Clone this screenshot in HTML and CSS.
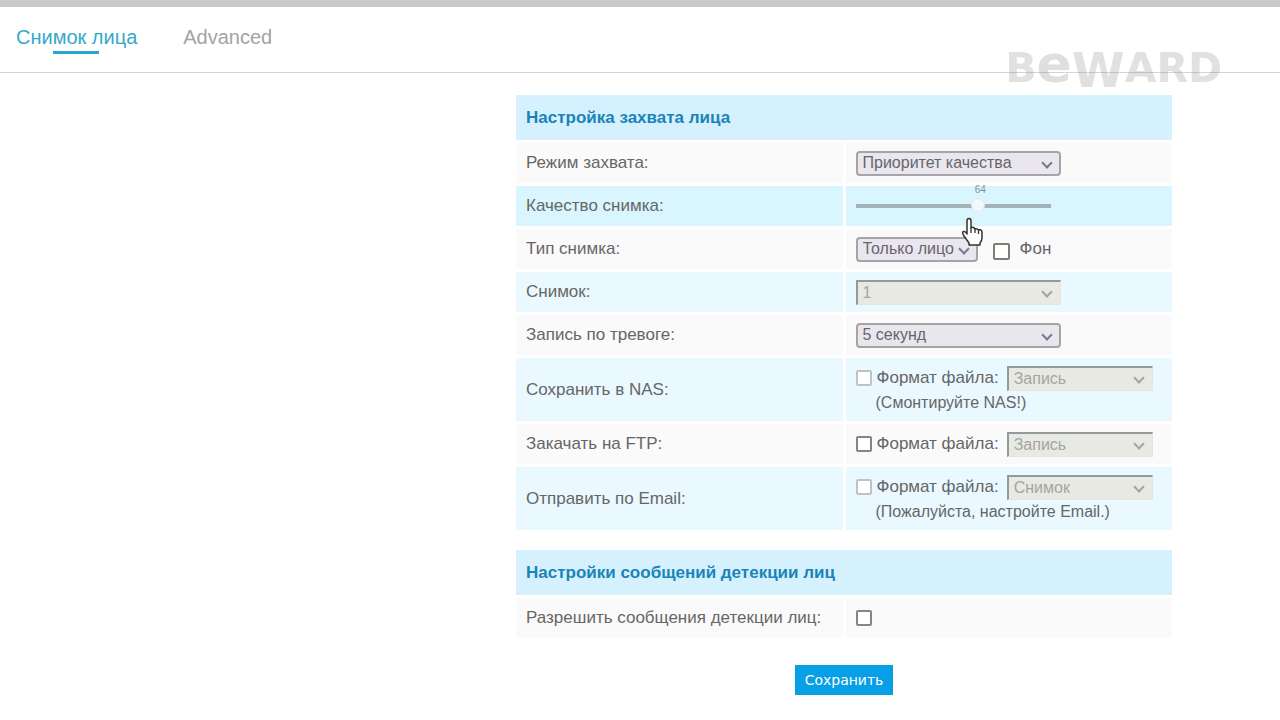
FILE: index.html
```
<!DOCTYPE html>
<html lang="ru">
<head>
    <meta charset="utf-8">
    <title>Снимок лица</title>
    <link rel="stylesheet" href="styles.css">
</head>
<body>
    <header class="header">
        <nav class="tabs">
            <a href="#face" class="tab active">Снимок лица</a>
            <a href="#advanced" class="tab">Advanced</a>
        </nav>
        <div class="logo">B<span class="logo-e">e</span><span class="logo-w">W</span>ARD</div>
    </header>
    <main class="main">
        <form class="settings">
            <table class="panel">
                <thead>
                    <tr><th colspan="2">Настройка захвата лица</th></tr>
                </thead>
                <tbody>
                    <tr>
                        <td><label for="mode">Режим захвата:</label></td>
                        <td>
                            <span class="select wide">
                                <select id="mode"><option>Приоритет качества</option></select>
                            </span>
                        </td>
                    </tr>
                    <tr class="hover">
                        <td><label for="quality">Качество снимка:</label></td>
                        <td>
                            <div class="slider">
                                <output class="slider-value" id="qualityValue" for="quality">64</output>
                                <input type="range" id="quality" min="0" max="100" value="64">
                                <svg class="pointer" viewBox="0 0 24 30" width="24" height="30">
                                    <path d="M6 17V4q0-2.500 2-2.500t2 2.500v7q1-1 2.500-.5 1 .5 1.500 1.500 2-1 3.500 1 3-1 3.500 2v6q0 3-2 5v2H8v-2L3 19q-2.500-4-.5-4.500t3.500 2.500z" fill="#fff" stroke="#333" stroke-width="1.500" stroke-linejoin="round"/>
                                    <path d="M10 11v5M14 12v4M17.500 13v4" fill="none" stroke="#333" stroke-width="1.300"/>
                                </svg>
                            </div>
                        </td>
                    </tr>
                    <tr>
                        <td><label for="type">Тип снимка:</label></td>
                        <td>
                            <div class="row">
                                <span class="select short">
                                    <select id="type"><option>Только лицо</option></select>
                                </span>
                                <label class="check"><input type="checkbox" class="big">Фон</label>
                            </div>
                        </td>
                    </tr>
                    <tr class="blue">
                        <td><label for="shots">Снимок:</label></td>
                        <td>
                            <span class="select wide">
                                <select id="shots" disabled><option>1</option></select>
                            </span>
                        </td>
                    </tr>
                    <tr>
                        <td><label for="record">Запись по тревоге:</label></td>
                        <td>
                            <span class="select wide">
                                <select id="record"><option>5 секунд</option></select>
                            </span>
                        </td>
                    </tr>
                    <tr class="blue tall">
                        <td><label for="nas">Сохранить в NAS:</label></td>
                        <td>
                            <div class="row">
                                <input type="checkbox" id="nas" disabled>
                                <label for="nasFormat" class="format">Формат файла:</label>
                                <span class="select medium">
                                    <select id="nasFormat" disabled><option>Запись</option></select>
                                </span>
                            </div>
                            <p class="note">(Смонтируйте NAS!)</p>
                        </td>
                    </tr>
                    <tr>
                        <td><label for="ftp">Закачать на FTP:</label></td>
                        <td>
                            <div class="row">
                                <input type="checkbox" id="ftp">
                                <label for="ftpFormat" class="format">Формат файла:</label>
                                <span class="select medium">
                                    <select id="ftpFormat" disabled><option>Запись</option></select>
                                </span>
                            </div>
                        </td>
                    </tr>
                    <tr class="blue tall">
                        <td><label for="email">Отправить по Email:</label></td>
                        <td>
                            <div class="row">
                                <input type="checkbox" id="email" disabled>
                                <label for="emailFormat" class="format">Формат файла:</label>
                                <span class="select medium">
                                    <select id="emailFormat" disabled><option>Снимок</option></select>
                                </span>
                            </div>
                            <p class="note">(Пожалуйста, настройте Email.)</p>
                        </td>
                    </tr>
                </tbody>
            </table>
            <table class="panel">
                <thead>
                    <tr><th colspan="2">Настройки сообщений детекции лиц</th></tr>
                </thead>
                <tbody>
                    <tr>
                        <td><label for="notify">Разрешить сообщения детекции лиц:</label></td>
                        <td><div class="row"><input type="checkbox" id="notify"></div></td>
                    </tr>
                </tbody>
            </table>
            <button type="button" class="save">Сохранить</button>
        </form>
    </main>
    <script>
        var quality = document.getElementById("quality");
        quality.oninput = function () {
            document.getElementById("qualityValue").value = quality.value;
        };
    </script>
</body>
</html>
```
FILE: styles.css
```
* {
    box-sizing: border-box;
}

body {
    margin: 0;
    background-color: #fff;
    border-top: 7px solid #c9c9c9;
    font-family: "Liberation Sans", Arial, sans-serif;
    font-size: 17px;
    color: #666;
}

.header {
    position: relative;
    height: 66px;
    border-bottom: 1px solid #d5d5d5;
}

.tabs {
    display: flex;
    gap: 46px;
    padding: 18px 16px;
}

.tab {
    position: relative;
    font-size: 20px;
    line-height: 24px;
    color: #a3a3a3;
    text-decoration: none;
}

.tab.active {
    color: #35a9cb;
}

.tab.active::after {
    content: "";
    position: absolute;
    left: 50%;
    bottom: -5px;
    width: 46px;
    height: 3px;
    margin-left: -24px;
    background-color: #2aa5ce;
}

.logo {
    position: absolute;
    top: 33px;
    right: 58px;
    font-family: "DejaVu Sans", sans-serif;
    font-size: 41px;
    line-height: 56px;
    font-weight: bold;
    color: rgba(120, 120, 120, 0.24);
}

.logo span {
    line-height: 1px;
}

.logo-e {
    font-size: 52px;
}

.logo-w {
    font-size: 48px;
    vertical-align: -5px;
}

.main {
    display: flex;
    justify-content: flex-end;
    padding: 19px 105px 20px 20px;
}

.settings {
    width: 662px;
    text-align: center;
}

.panel {
    width: 100%;
    margin-bottom: 14px;
    border-spacing: 3px;
    table-layout: fixed;
    text-align: left;
}

th {
    height: 45px;
    padding: 0 10px;
    background-color: #d5f1fe;
    color: #1a84b8;
}

td {
    height: 40px;
    padding: 0 10px;
    background-color: #fbfafb;
}

.blue td {
    background-color: #e9f9ff;
}

.hover td {
    background-color: #d9f6fe;
}

.tall td {
    height: 63px;
}

.row {
    display: flex;
    align-items: center;
    gap: 5px;
}

.format {
    margin-right: 3px;
}

.select {
    position: relative;
    display: block;
}

.select::after {
    content: "";
    position: absolute;
    top: 8px;
    right: 10px;
    width: 6px;
    height: 6px;
    border-right: 2px solid #777a8c;
    border-bottom: 2px solid #777a8c;
    transform: rotate(45deg);
    pointer-events: none;
}

.select:has(:disabled)::after {
    border-color: #a3a69e;
}

.wide {
    width: 205px;
}

.short {
    width: 122px;
}

.medium {
    width: 146px;
}

select {
    display: block;
    appearance: none;
    width: 100%;
    height: 25px;
    padding: 0 5px 1px;
    border: 2px solid #a5a3a8;
    border-radius: 4px;
    background-color: #e9e7ed;
    font-family: inherit;
    font-size: 16px;
    color: #66656b;
}

select:disabled {
    border-color: #929b9b #e2e5e0 #e2e5e0 #929b9b;
    border-width: 2px 1px 1px 2px;
    border-radius: 0;
    background-color: #e8e9e3;
    color: #a3a69e;
    opacity: 1;
}

input[type="checkbox"] {
    appearance: none;
    width: 16px;
    height: 16px;
    margin: 0;
    border: 2px solid #858585;
    border-radius: 2px;
    background-color: #fff;
}

input[type="checkbox"]:disabled {
    border-color: #bcc4c8;
}

input[type="checkbox"].big {
    width: 17px;
    height: 17px;
    margin-top: 4px;
    border-color: #7d7d73;
}

.check {
    display: flex;
    align-items: center;
    gap: 10px;
    margin-left: 10px;
}

.slider {
    position: relative;
    width: 195px;
    height: 40px;
}

.slider-value {
    position: absolute;
    top: -2px;
    left: 64%;
    width: 20px;
    margin-left: -10px;
    font-size: 10px;
    line-height: 12px;
    text-align: center;
    color: #7d9299;
}

input[type="range"] {
    appearance: none;
    display: block;
    width: 100%;
    height: 40px;
    margin: 0;
    background: none;
}

input[type="range"]::-webkit-slider-runnable-track {
    height: 4px;
    background-color: #a3b2b7;
}

input[type="range"]::-webkit-slider-thumb {
    appearance: none;
    width: 14px;
    height: 14px;
    margin-top: -6px;
    border: 1px solid #dcebf0;
    border-radius: 50%;
    background-color: #f2f9fb;
}

.pointer {
    position: absolute;
    z-index: 1;
    top: 31px;
    left: 105px;
    pointer-events: none;
}

.note {
    margin: 2px 0 0;
    padding: 0 0 2px 20px;
    font-size: 16px;
    line-height: 19px;
}

.save {
    height: 30px;
    margin-top: 10px;
    padding: 0 10px;
    border: none;
    background-color: #07a0e6;
    font-family: "DejaVu Sans", sans-serif;
    font-size: 14px;
    color: #fff;
    cursor: pointer;
}
```
